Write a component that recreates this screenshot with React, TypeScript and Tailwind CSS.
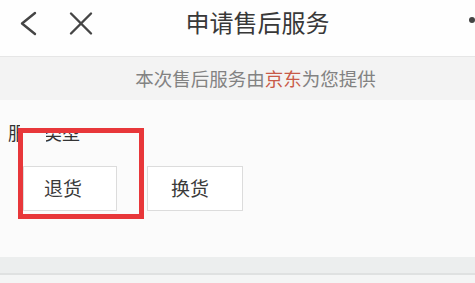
import React from "react";

export default function App() {
  const font = { fontFamily: '"Noto Sans CJK SC", "Noto Sans", sans-serif' };
  return (
    <div className="relative w-[475px] h-[283px] overflow-hidden bg-[#fbfbfb]" style={font}>
      {/* header */}
      <div className="flex items-center h-[57px] bg-[#fefefe] border-b border-[#e6e6e6]">
        <div className="w-[100px] h-full flex items-center">
          <svg width="100" height="57" viewBox="0 0 100 57">
            <polyline points="35,13 22,23.5 35,34" fill="none" stroke="#454545" strokeWidth="2.4" strokeLinecap="round" strokeLinejoin="round" />
            <line x1="71" y1="13.5" x2="91" y2="33.5" stroke="#454545" strokeWidth="2.4" strokeLinecap="round" />
            <line x1="91" y1="13.5" x2="71" y2="33.5" stroke="#454545" strokeWidth="2.4" strokeLinecap="round" />
          </svg>
        </div>
        <div className="flex-1 text-center text-[24px] leading-[30px] text-[#383838] -mt-[13px]">申请售后服务</div>
        <div className="w-[60px] h-full flex justify-end pt-[17px]">
          <div className="w-[6px] h-[6px] rounded-full bg-[#444]" />
        </div>
      </div>
      {/* provider band */}
      <div className="h-[43px] bg-[#f3f3f3] flex items-center justify-center pl-[36px] text-[18.5px] text-[#828282]">
        <span>
          本次售后服务由<span className="text-[#c85a48]">京东</span>为您提供
        </span>
      </div>
      {/* content */}
      <div className="h-[157px] bg-[#fbfbfb] pt-[22px]">
        <div className="pl-[8px] text-[18px] leading-[20px] text-[#333]">服务类型</div>
        <div className="flex gap-[30px] pl-[23px] mt-[24px]">
          <div className="w-[94px] h-[45px] border border-[#dcdcdc] bg-white flex items-center justify-center pr-[14px] text-[19px] text-[#3a3a3a]">退货</div>
          <div className="w-[96px] h-[45px] border border-[#dcdcdc] bg-white flex items-center justify-center pr-[10px] text-[19px] text-[#3a3a3a]">换货</div>
        </div>
      </div>
      {/* bottom band */}
      <div className="h-[18px] bg-[#eceeee] border-b-2 border-[#dfe1e1]" />
      <div className="h-[10px] bg-[#f4f5f5]" />

      {/* annotation overlays */}
      <div className="absolute left-[20px] top-[116px] w-[80px] h-[12px] bg-[#fbfbfb]" />
      <div className="absolute left-[22px] top-[128px] w-[24px] h-[18px] bg-[#fbfbfb]" />
      <div className="absolute left-[18px] top-[128px] w-[126px] h-[91px] border-[5px] border-[#e8373a]" />
    </div>
  );
}
